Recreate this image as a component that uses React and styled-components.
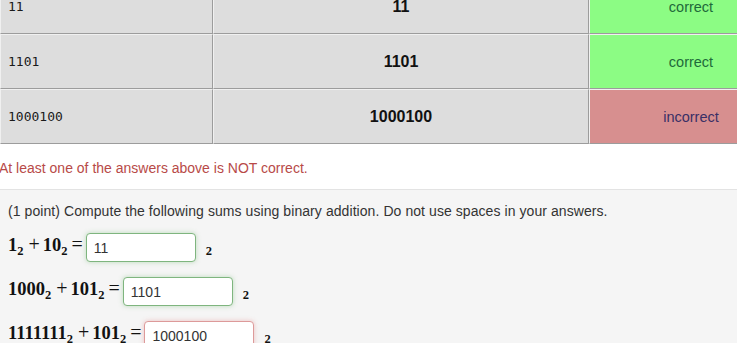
import React from 'react';
import styled, { createGlobalStyle } from 'styled-components';

const rows = [
  { entered: '11', shown: '11', ok: true },
  { entered: '1101', shown: '1101', ok: true },
  { entered: '1000100', shown: '1000100', ok: false },
];

const problems = [
  { a: '1', b: '10', answer: '11', ok: true },
  { a: '1000', b: '101', answer: '1101', ok: true },
  { a: '1111111', b: '101', answer: '1000100', ok: false },
];

const App = () => (
  <>
    <GlobalStyle />
    <Page>
      <Results>
        <colgroup>
          <col style={{ width: 213 }} />
          <col style={{ width: 376 }} />
          <col />
        </colgroup>
        <tbody>
          {rows.map((r) => (
            <tr key={r.entered}>
              <Entered>{r.entered}</Entered>
              <Preview>{r.shown}</Preview>
              <Status $ok={r.ok}>{r.ok ? 'correct' : 'incorrect'}</Status>
            </tr>
          ))}
        </tbody>
      </Results>

      <Message>At least one of the answers above is NOT correct.</Message>

      <Problem>
        <Intro>
          (1 point) Compute the following sums using binary addition. Do not use spaces in
          your answers.
        </Intro>
        {problems.map((p) => (
          <MathRow key={p.a}>
            <Expr>
              <Num>{p.a}</Num>
              <Sub>2</Sub>
              <Op>+</Op>
              <Num>{p.b}</Num>
              <Sub>2</Sub>
              <Op $eq>=</Op>
            </Expr>
            <Answer $ok={p.ok} defaultValue={p.answer} readOnly />
            <Base>2</Base>
          </MathRow>
        ))}
      </Problem>
    </Page>
  </>
);

export default App;

const GlobalStyle = createGlobalStyle`
  html, body {
    margin: 0;
    padding: 0;
    background: #ffffff;
    overflow: hidden;
  }
  body {
    font-family: 'Liberation Sans', Arial, sans-serif;
    color: #333;
  }
`;

const Page = styled.div`
  width: 737px;
  height: 343px;
  overflow: hidden;
`;

const Results = styled.table`
  margin-top: -21px;
  width: 793px;
  border-collapse: separate;
  border-spacing: 0;
  table-layout: fixed;

  td {
    box-sizing: border-box;
    height: 55px;
    padding: 0;
    border-top: 1px solid #f0f0f0;
    border-left: 1px solid #f0f0f0;
    border-bottom: 1px solid #9c9c9c;
    border-right: 1px solid #9c9c9c;
    background: #dddddd;
    vertical-align: middle;
  }
`;

const Entered = styled.td`
  padding-left: 7px !important;
  font-family: 'DejaVu Sans Mono', monospace;
  font-size: 13px;
  color: #1a1a1a;
`;

const Preview = styled.td`
  text-align: center;
  font-weight: bold;
  font-size: 16px;
  color: #111;
`;

const Status = styled.td`
  text-align: center;
  font-size: 14.5px;
  background: ${(p) => (p.$ok ? '#8cfc84' : '#d78f8f')} !important;
  color: ${(p) => (p.$ok ? '#1f6a3a' : '#3a2f66')};
`;

const Message = styled.div`
  padding: 14px 0 11px;
  margin-left: -1px;
  line-height: 20px;
  font-size: 14px;
  color: #b84a48;
`;

const Problem = styled.div`
  display: flex;
  flex-direction: column;
  gap: 15px;
  border-top: 1px solid #e3e3e3;
  background: #f5f5f5;
  padding: 11px 8px 20px;
  height: 200px;
`;

const Intro = styled.div`
  line-height: 20px;
  font-size: 14px;
  letter-spacing: 0.07px;
  color: #333;
  margin-bottom: -3px;
`;

const MathRow = styled.div`
  display: flex;
  align-items: center;
  gap: 3px;
  height: 29px;
  font-family: 'Liberation Serif', 'Times New Roman', serif;
  color: #111;
`;

const Expr = styled.span`
  white-space: nowrap;
  line-height: 29px;
`;

const Num = styled.span`
  font-weight: bold;
  font-size: 18.5px;
`;

const Sub = styled.span`
  font-weight: bold;
  font-size: 12.5px;
  vertical-align: -4px;
`;

const Op = styled.span`
  font-size: 20px;
  margin: ${(p) => (p.$eq ? '0 0 0 4px' : '0 3px 0 5px')};
`;

const Answer = styled.input`
  box-sizing: border-box;
  width: 110px;
  height: 29px;
  padding: 0 7px;
  border: 1px solid ${(p) => (p.$ok ? '#7fb57f' : '#dd9a9a')};
  border-radius: 4px;
  box-shadow: 0 0 5px ${(p) => (p.$ok ? 'rgba(80, 170, 80, 0.35)' : 'rgba(220, 100, 100, 0.35)')};
  background: #fff;
  font-family: 'Liberation Sans', Arial, sans-serif;
  font-size: 14px;
  color: #333;
  outline: none;
`;

const Base = styled.span`
  font-weight: bold;
  font-size: 12.5px;
  margin-left: 7px;
  align-self: flex-end;
  line-height: 22px;
`;
